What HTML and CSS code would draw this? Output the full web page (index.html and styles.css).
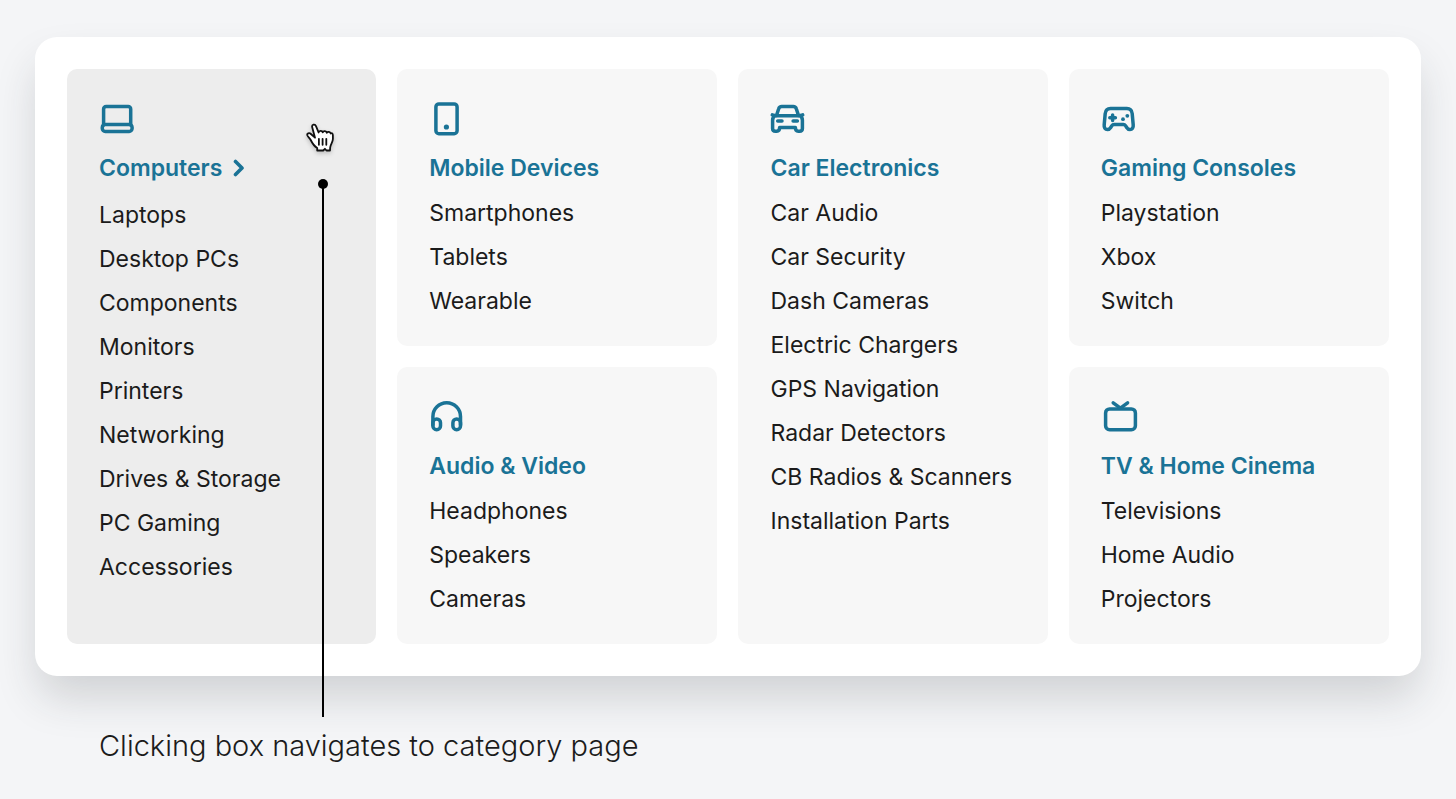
FILE: index.html
```
<!DOCTYPE html>
<html lang="en">
<head>
    <meta charset="UTF-8">
    <meta name="viewport" content="width=device-width, initial-scale=1.0">
    <title>Product Categories</title>
    <link rel="stylesheet" href="styles.css">
</head>
<body>
    <nav class="menu">
        <!-- Computers -->
        <section class="card tall active">
            <svg class="icon" viewBox="0 0 36 36"><path d="M4.6 24V8.1a2.5 2.5 0 0 1 2.5-2.5h22.1a2.5 2.5 0 0 1 2.5 2.5V24"/><rect x="3.3" y="23.4" width="29.8" height="7" rx="3"/></svg>
            <h2><a href="#computers">Computers <svg class="chevron" viewBox="0 0 12 18"><path d="M2.5 2.5 9 9l-6.500 6.500"/></svg></a></h2>
            <ul>
                <li><a href="#laptops">Laptops</a></li>
                <li><a href="#desktops">Desktop PCs</a></li>
                <li><a href="#components">Components</a></li>
                <li><a href="#monitors">Monitors</a></li>
                <li><a href="#printers">Printers</a></li>
                <li><a href="#networking">Networking</a></li>
                <li><a href="#storage">Drives &amp; Storage</a></li>
                <li><a href="#pc-gaming">PC Gaming</a></li>
                <li><a href="#accessories">Accessories</a></li>
            </ul>
            <svg class="cursor" viewBox="0 0 30 32"><path d="M7.200 5.200C6.500 2.500 10 1.500 11 4.200l2.600 6.300c.3-2.200 3.600-2.300 4.100-.1.700-1.800 3.700-1.600 4.100.5.900-1.500 3.400-1.300 3.900.6 1.200-1 2.200.2 2.200 2v3.600c0 3.200-2.400 5.400-2.700 8.200l-.2 3.200h-3.500l-1.600-1.700-1.700 1.700h-6v-2.600c-2.700-1.600-4.800-4.400-6.500-7.900-.8-1.700-2.700-3.100-3.300-4.500-.8-2.100 1.800-3.100 3.500-1.500l4.100 3.700z"/><path d="M13.900 16.800v6M17.600 16.800v6M21.300 16.800v6"/></svg>
            <span class="pointer-line"></span>
        </section>

        <!-- Mobile Devices -->
        <section class="card">
            <svg class="icon" viewBox="0 0 36 36"><rect x="6.900" y="2.900" width="21.200" height="29.800" rx="3"/><circle class="fill" cx="17.400" cy="26" r="2.600"/></svg>
            <h2><a href="#mobile">Mobile Devices</a></h2>
            <ul>
                <li><a href="#smartphones">Smartphones</a></li>
                <li><a href="#tablets">Tablets</a></li>
                <li><a href="#wearable">Wearable</a></li>
            </ul>
        </section>

        <!-- Car Electronics -->
        <section class="card tall">
            <svg class="icon" viewBox="0 0 36 36"><path d="M6.500 14.500 8.600 8c.5-1.700 1.400-2.400 3.200-2.400h11.400c1.800 0 2.700.7 3.200 2.400l2.100 6.500"/><path d="M2.300 13.800l2.200.9h26l2.200-.9M5 14.500c-1.600 1.200-2.400 2.700-2.400 4.800v8.200c0 1.800.9 2.700 2.800 2.700h1.400c1.900 0 2.800-1 2.800-3.600h15.800c0 2.600.9 3.600 2.800 3.600h1.400c1.900 0 2.800-.9 2.800-2.700v-8.200c0-2.100-.8-3.600-2.400-4.800"/><path d="M7.700 20.100h4.300M23.100 20.100h4.300"/></svg>
            <h2><a href="#car">Car Electronics</a></h2>
            <ul>
                <li><a href="#car-audio">Car Audio</a></li>
                <li><a href="#car-security">Car Security</a></li>
                <li><a href="#dash-cameras">Dash Cameras</a></li>
                <li><a href="#chargers">Electric Chargers</a></li>
                <li><a href="#gps">GPS Navigation</a></li>
                <li><a href="#radar">Radar Detectors</a></li>
                <li><a href="#cb-radios">CB Radios &amp; Scanners</a></li>
                <li><a href="#parts">Installation Parts</a></li>
            </ul>
        </section>

        <!-- Gaming Consoles -->
        <section class="card">
            <svg class="icon" viewBox="0 0 36 36"><path d="M9.500 7.600h16.400c3.300 0 4.900 1.700 5.300 5l1 11.200c.3 2.800-1 4.700-3.200 4.700-1.500 0-2.500-.7-3.300-2l-1.200-1.900c-.5-.8-1.200-1.200-2.200-1.200h-9.200c-1 0-1.700.4-2.200 1.200l-1.200 1.900c-.8 1.300-1.800 2-3.300 2-2.200 0-3.500-1.900-3.200-4.700l1-11.200c.4-3.300 2-5 5.300-5z"/><path d="M11.600 14v5.600M8.800 16.800h5.600"/><circle class="fill" cx="26.300" cy="14.800" r="1.900"/><circle class="fill" cx="22" cy="18.200" r="1.900"/></svg>
            <h2><a href="#gaming">Gaming Consoles</a></h2>
            <ul>
                <li><a href="#playstation">Playstation</a></li>
                <li><a href="#xbox">Xbox</a></li>
                <li><a href="#switch">Switch</a></li>
            </ul>
        </section>

        <!-- Audio & Video -->
        <section class="card">
            <svg class="icon" viewBox="0 0 36 36"><path d="M3.900 26v-8.400a13.800 13.800 0 0 1 27.600 0V26"/><rect x="3.900" y="19.900" width="7.600" height="10.800" rx="3.800"/><rect x="23.900" y="19.900" width="7.600" height="10.800" rx="3.800"/></svg>
            <h2><a href="#audio-video">Audio &amp; Video</a></h2>
            <ul>
                <li><a href="#headphones">Headphones</a></li>
                <li><a href="#speakers">Speakers</a></li>
                <li><a href="#cameras">Cameras</a></li>
            </ul>
        </section>

        <!-- TV & Home Cinema -->
        <section class="card">
            <svg class="icon" viewBox="0 0 36 36"><rect x="4.600" y="9.900" width="29.800" height="20.800" rx="4"/><path d="M12.200 3.800l7.200 5.400 7.200-5.400"/></svg>
            <h2><a href="#tv">TV &amp; Home Cinema</a></h2>
            <ul>
                <li><a href="#televisions">Televisions</a></li>
                <li><a href="#home-audio">Home Audio</a></li>
                <li><a href="#projectors">Projectors</a></li>
            </ul>
        </section>
    </nav>
    <p class="caption">Clicking box navigates to category page</p>
</body>
</html>
```

FILE: styles.css
```
body {
    font-family: Inter, "Liberation Sans", sans-serif;
    margin: 0;
    padding: 37px 35px 0;
    background-color: #f4f5f7;
    color: #1b1b1b;
}
a {
    color: inherit;
    text-decoration: none;
}
li a:hover {
    text-decoration: underline;
}
.menu {
    display: grid;
    grid-template-columns: minmax(0, 309fr) minmax(0, 320fr) minmax(0, 309fr) minmax(0, 320fr);
    gap: 21px;
    padding: 32px;
    background: white;
    border-radius: 22px;
    box-shadow: 0 24px 44px -4px rgba(40, 45, 50, 0.18);
}
.card {
    padding: 32px 32px 23px;
    background: #f7f7f7;
    border-radius: 10px;
}
.tall {
    grid-row: span 2;
}
.active {
    position: relative;
    background: #ededed;
}
.icon {
    display: block;
    width: 36px;
    height: 36px;
    margin-bottom: 9px;
    overflow: visible;
}
svg {
    fill: none;
    stroke: #1a7396;
    stroke-width: 3.5;
    stroke-linecap: round;
    stroke-linejoin: round;
}
.fill {
    fill: #1a7396;
    stroke: none;
}
h2 {
    margin: 0 0 1px;
    font-size: 23px;
    font-weight: 600;
    line-height: 44px;
    color: #1a7396;
    white-space: nowrap;
}
.active h2 {
    margin-bottom: 3px;
}
.chevron {
    width: 12px;
    height: 18px;
    margin-left: 5px;
    stroke-width: 3.6;
    vertical-align: -1px;
}
ul {
    list-style: none;
    margin: 0;
    padding: 0;
}
li {
    font-size: 23px;
    line-height: 44px;
    white-space: nowrap;
}
.cursor {
    position: absolute;
    top: 53px;
    right: 41px;
    width: 30px;
    height: 32px;
    fill: white;
    stroke: #111;
    stroke-width: 1.8;
    filter: drop-shadow(0 2px 2px rgba(0, 0, 0, 0.2));
}
/* line from the hovered box down to the caption */
.pointer-line {
    position: absolute;
    top: 115px;
    bottom: -73px;
    right: 52px;
    width: 2px;
    background: black;
}
.pointer-line::before {
    content: "";
    position: absolute;
    top: -5px;
    left: -4px;
    width: 10px;
    height: 10px;
    border-radius: 50%;
    background: black;
}
.caption {
    margin: 48px 64px 0;
    font-size: 29px;
    font-weight: 300;
    line-height: 44px;
}
```
